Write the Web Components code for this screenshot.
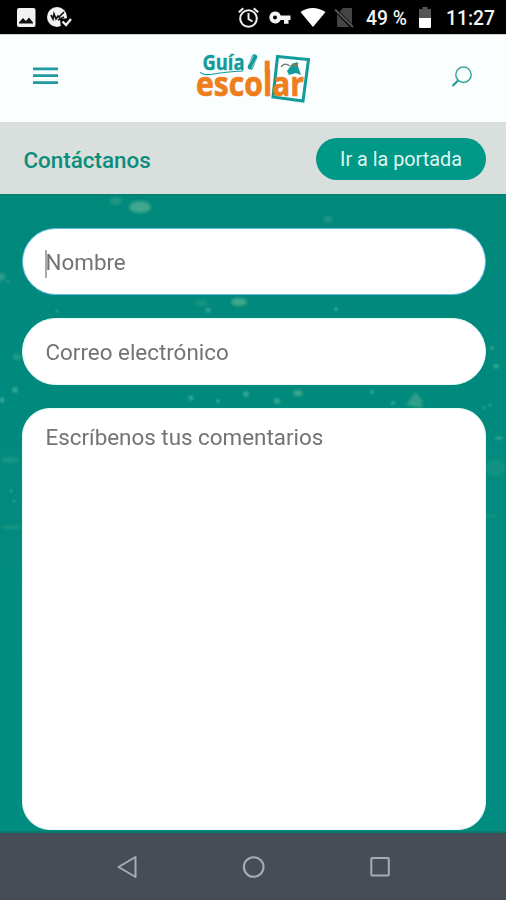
<!DOCTYPE html>
<html lang="es">
<head>
<meta charset="utf-8">
<title>Guía escolar</title>
<style>
html,body{margin:0;height:100%;overflow:hidden}
body{font-family:Roboto,"Liberation Sans",sans-serif}
</style>
</head>
<body>
<contact-screen></contact-screen>
<script>
const define = (name, html) => customElements.define(name, class extends HTMLElement {
  constructor() {
    super();
    const t = document.createElement('template');
    t.innerHTML = html;
    this.attachShadow({mode: 'open'}).append(t.content.cloneNode(true));
  }
});

define('status-bar', `
<style>
:host{display:flex;align-items:center;justify-content:space-between;box-sizing:border-box;height:34px;background:#000;color:#f4f4f4;flex:none;padding:0 11px 0 0;font-size:19.300px;font-weight:500}
svg{display:block}
.right{display:flex;align-items:center;height:34px;padding-top:2px;box-sizing:border-box}
.pct{margin-left:12px;width:43px;white-space:nowrap}
.bat{margin-left:9px}
.time{margin-left:12px;width:51px;text-align:right;white-space:nowrap}
</style>
<svg width="80" height="34" viewBox="0 0 80 34">
<rect x="17" y="8" width="18.500" height="19" rx="2" fill="#f2f2f2"/>
<path d="M19 23.500v-1l4-4.500 3 3 3-3.500 4 5v1z" fill="#111"/>
<circle cx="57" cy="17" r="10" fill="#f2f2f2"/>
<path d="M51 15l2 4 1-5 2 5 2-3 2 2M59 17l5-5M58 20l6-3" fill="none" stroke="#111" stroke-width="1.700"/>
<path d="M60 19l10-1-4 10h-5z" fill="#000"/>
<path d="M62.500 21.500l3.500 3.500 5-6" fill="none" stroke="#eee" stroke-width="2.400"/>
</svg>
<div class="right">
<svg width="118" height="32" viewBox="237 2 118 32" fill="none">
<circle cx="249.500" cy="18.500" r="8.300" stroke="#eee" stroke-width="2.100"/>
<path d="M249.500 13v6l4 2.500M239.800 12.300l4.500-4M259.200 12.300l-4.500-4" stroke="#eee" stroke-width="2"/>
<path fill="#f4f4f4" fill-rule="evenodd" d="M276 11.400a6 6 0 0 1 5.700 4H291.500v4.700h-2v3.600h-4.500v-3.600h-3.300a6 6 0 1 1-5.700-8.700zm0 4a2 2 0 1 0 0 4 2 2 0 0 0 0-4z"/>
<path fill="#fff" d="M301.500 12q12-8 25 0L314 27z"/>
<path fill="#444" d="M344 8h8q1 0 1 1v15L340.500 11.500zM338 14l12.500 13H339q-1 0-1-1z"/>
<path d="M336 9.500l18 17.500" stroke="#555" stroke-width="2"/>
</svg>
<span class="pct">49 %</span>
<svg class="bat" width="14" height="32" viewBox="418 2 14 32"><path fill="#555" d="M419 9h3.500V7h5v2h3.500v9h-12z"/><path fill="#fff" d="M419 18h12v9q0 1-1 1h-10q-1 0-1-1z"/></svg>
<span class="time">11:27</span>
</div>`);

define('brand-logo', `
<style>:host{display:block;width:118px;height:58px}svg{display:block;overflow:visible}text{font-family:"Open Sans","Noto Sans",sans-serif;font-weight:700}</style>
<svg width="118" height="58" viewBox="196 49 118 58">
<path d="M277.500 56.500L308.500 59.500 303 101 273 97z" fill="#fafefe" stroke="#129b9b" stroke-width="3"/>
<path d="M281 67q3-5 9-1" fill="none" stroke="#777" stroke-width="1.300"/>
<path d="M287 71l5-7 5-2 1.500 6 2.500 7-5-2-7 2z" fill="#129b9b"/>
<path d="M292 64l4 2 2-3" stroke="#8e7550" stroke-width="1.500" fill="none"/>
<text x="202.500" y="69.500" font-size="22" textLength="42" lengthAdjust="spacingAndGlyphs" fill="#129b9b" stroke="#129b9b" stroke-width=".4">Guía</text>
<path d="M200 72q3 4 14 2t29-3" fill="none" stroke="#129b9b" stroke-width="1.100"/>
<path d="M250.500 67l4-10" stroke="#129b9b" stroke-width="5.500" stroke-linecap="round"/>
<path d="M248.500 65l5-9M251.500 68l5-9" stroke="#b9dcda" stroke-width=".8"/>
<text x="196" y="95.500" font-size="34.500" textLength="108" lengthAdjust="spacingAndGlyphs" fill="#ee7d1b" stroke="#ee7d1b" stroke-width=".7">escolar</text>
<rect x="264.700" y="60.600" width="5" height="12" fill="#ee7d1b"/>
</svg>`);

define('app-header', `
<style>
:host{display:flex;justify-content:space-between;align-items:flex-start;box-sizing:border-box;height:88px;flex:none;padding:14px 32px;background:#fafefe;border-top:1px solid #d5d3d7}
svg{display:block}
</style>
<svg width="28" height="56" viewBox="32 49 28 56"><path d="M33 68.800H58M33 75.700H58M33 82.700H58" stroke="#2099a0" stroke-width="2.700"/></svg>
<brand-logo></brand-logo>
<svg width="24" height="56" viewBox="450 49 24 56"><circle cx="463.500" cy="74.700" r="7.700" fill="none" stroke="#3da69c" stroke-width="1.500"/><path d="M458 80.500L452.500 86" stroke="#1d978d" stroke-width="2"/></svg>`);

define('pill-button', `
<style>:host{display:flex;align-items:center;justify-content:center;width:170px;height:42px;border-radius:21px;background:#009887;color:#dff7f3;font-size:19.800px;white-space:nowrap;box-sizing:border-box}</style><slot></slot>`);

define('title-bar', `
<style>
:host{display:flex;align-items:center;justify-content:space-between;box-sizing:border-box;height:72px;flex:none;padding:2px 20px 0 23.500px;background:#d9dfdd;color:#0b8d7b}
h1{margin:2px 0 0;font-size:22.400px;font-weight:500;line-height:26px}
</style>
<h1><slot></slot></h1><slot name="action"></slot>`);

define('form-field', `
<style>
:host{display:block;box-sizing:border-box;height:67px;flex:none;border-radius:34px;background:#fff;padding:0 23px;color:#717376;font-size:22.400px;line-height:67px;border:1px solid #e5fbf8}
:host([focused]){border-color:#62bce7}
:host([multiline]){height:422px;border-radius:28px;line-height:30px;padding-top:13px}
i{display:none}
:host([focused]) i{display:inline-block;width:2px;height:28px;background:#aaa;vertical-align:middle;margin:0 -1px 0 -1px}
</style><i></i><slot></slot>`);

define('chalk-specks', `
<style>:host{position:absolute;inset:0}svg{display:block}</style>
<svg width="506" height="639" viewBox="0 194 506 639">
<defs><filter id="b"><feGaussianBlur stdDeviation="1.800"/></filter><filter id="s"><feGaussianBlur stdDeviation=".8"/></filter></defs>
<g fill="#55b293" filter="url(#b)" opacity=".75">
<ellipse cx="140" cy="206" rx="11" ry="6"/><ellipse cx="116" cy="200" rx="6" ry="4" opacity=".5"/>
<ellipse cx="239" cy="301" rx="8" ry="4"/><ellipse cx="328" cy="218" rx="5" ry="3" opacity=".5"/>
<path d="M406 404l9-13 7 8v8z" opacity=".75"/><ellipse cx="1" cy="276" rx="4" ry="4" opacity=".7"/>
<ellipse cx="298" cy="392" rx="5" ry="3"/><ellipse cx="201" cy="302" rx="7" ry="3" opacity=".4"/>
<ellipse cx="17" cy="356" rx="4" ry="3" opacity=".6"/><ellipse cx="10" cy="459" rx="9" ry="3" opacity=".4"/>
<ellipse cx="495" cy="467" rx="10" ry="9" opacity=".25"/><ellipse cx="12" cy="526" rx="11" ry="2" opacity=".4"/>
</g>
<g fill="#4eb69e" filter="url(#s)" opacity=".65">
<circle cx="15" cy="389" r="3"/><circle cx="2" cy="399" r="2.500"/><circle cx="246" cy="393" r="3"/><circle cx="191" cy="397" r="2.500"/><circle cx="218" cy="400" r="2"/><circle cx="277" cy="400" r="3"/><circle cx="208" cy="309" r="2.500"/><circle cx="336" cy="308" r="2"/><circle cx="372" cy="391" r="2"/><circle cx="393" cy="402" r="2"/><circle cx="496" cy="365" r="2.500"/><circle cx="492" cy="347" r="2"/><circle cx="57" cy="310" r="1.500"/><circle cx="484" cy="407" r="1.500"/><circle cx="490" cy="404" r="1.500"/><circle cx="11" cy="490" r="1.500"/><circle cx="14" cy="500" r="1.500"/><circle cx="8" cy="280" r="1.500"/><ellipse cx="499" cy="437" rx="4" ry="1.500"/><ellipse cx="490" cy="515" rx="8" ry="1" opacity=".5"/>
</g></svg>`);

define('contact-form', `
<style>
:host{display:block;position:relative;flex:1;min-height:0;background:linear-gradient(#00887b,#008b7e 45%,#008d80);box-sizing:border-box;border-top:1px solid #087b70;border-bottom:2px solid #087a70}
main{position:relative;display:flex;flex-direction:column;gap:23px;padding:33px 20.500px 0 21.500px}
</style>
<chalk-specks></chalk-specks><main><slot></slot></main>`);

define('nav-bar', `
<style>:host{display:flex;align-items:center;justify-content:space-between;box-sizing:border-box;height:67px;flex:none;background:#464d57;padding:0 113px 0 114px}svg{display:block}</style>
<svg width="26" height="26" viewBox="114 854 26 26"><path d="M135.500 857v20l-17-10z" fill="none" stroke="#a8acb1" stroke-width="2" stroke-linejoin="round"/></svg>
<svg width="26" height="26" viewBox="240.500 854 26 26"><circle cx="253.200" cy="867" r="9.800" fill="none" stroke="#a8acb1" stroke-width="2.100"/></svg>
<svg width="26" height="26" viewBox="367 854 26 26"><rect x="371.300" y="858" width="17.500" height="17.500" rx="1" fill="none" stroke="#a8acb1" stroke-width="2"/></svg>`);

define('contact-screen', `
<style>:host{display:flex;flex-direction:column;width:506px;height:900px;overflow:hidden}</style>
<status-bar></status-bar>
<app-header></app-header>
<title-bar>Contáctanos<pill-button slot="action">Ir a la portada</pill-button></title-bar>
<contact-form>
<form-field focused>Nombre</form-field>
<form-field>Correo electrónico</form-field>
<form-field multiline>Escríbenos tus comentarios</form-field>
</contact-form>
<nav-bar></nav-bar>`);
</script>
</body>
</html>
